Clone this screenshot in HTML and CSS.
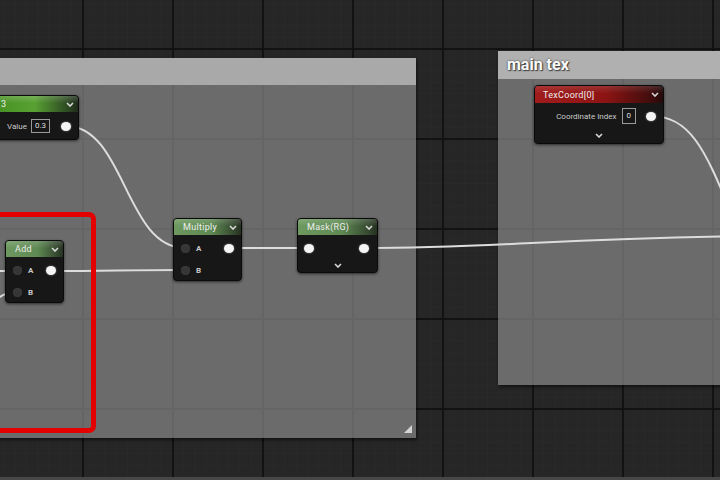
FILE: index.html
```html
<html>
  <head>
    <title>Material Graph</title>
    <meta name="viewport" content="width=device-width, initial-scale=1.0" />
    <link rel="stylesheet" href="styles.css">
  </head>
  <body>
    <div class="graph">
      <div class="comment comment-left">
        <div class="comment-title"></div>
        <span class="resize-grip"></span>
      </div>
      <div class="comment comment-right">
        <div class="comment-title">main tex</div>
      </div>

      <svg class="wires" width="720" height="480" viewBox="0 0 720 480">
        <path d="M66 126 C 125 126, 125 248, 185 248" />
        <path d="M-20 271 L 17 271" />
        <path d="M-30 312 C -8 312, -6 292, 17 292" />
        <path d="M50 271 C 110 271, 125 270, 185 270" />
        <path d="M229 248 L 309 248" />
        <path d="M364 248 C 500 248, 560 238, 760 236" />
        <path d="M651 116 C 690 116, 705 150, 730 210" />
      </svg>

      <!-- constant -->
      <div class="node node-const">
        <div class="node-head head-bright">
          <span class="node-name">3</span>
          <svg class="chevron" width="8" height="5" viewBox="0 0 8 5"><polyline points="1,1 4,4 7,1" /></svg>
        </div>
        <div class="node-body">
          <div class="pin-row pin-row-end">
            <span class="pin-label">Value</span>
            <span class="value-box">0.3</span>
            <span class="pin pin-out"></span>
          </div>
        </div>
      </div>

      <!-- add -->
      <div class="node node-add">
        <div class="node-head head-math">
          <span class="node-name">Add</span>
          <svg class="chevron" width="8" height="5" viewBox="0 0 8 5"><polyline points="1,1 4,4 7,1" /></svg>
        </div>
        <div class="node-body">
          <div class="pin-row">
            <span class="pin-in-group"><span class="pin pin-in"></span><span class="pin-label">A</span></span>
            <span class="pin pin-out"></span>
          </div>
          <div class="pin-row">
            <span class="pin-in-group"><span class="pin pin-in"></span><span class="pin-label">B</span></span>
          </div>
        </div>
      </div>

      <!-- multiply -->
      <div class="node node-multiply">
        <div class="node-head head-math">
          <span class="node-name">Multiply</span>
          <svg class="chevron" width="8" height="5" viewBox="0 0 8 5"><polyline points="1,1 4,4 7,1" /></svg>
        </div>
        <div class="node-body">
          <div class="pin-row">
            <span class="pin-in-group"><span class="pin pin-in"></span><span class="pin-label">A</span></span>
            <span class="pin pin-out"></span>
          </div>
          <div class="pin-row">
            <span class="pin-in-group"><span class="pin pin-in"></span><span class="pin-label">B</span></span>
          </div>
        </div>
      </div>

      <!-- mask -->
      <div class="node node-mask">
        <div class="node-head head-math">
          <span class="node-name">Mask(RG)</span>
          <svg class="chevron" width="8" height="5" viewBox="0 0 8 5"><polyline points="1,1 4,4 7,1" /></svg>
        </div>
        <div class="node-body">
          <div class="pin-row pin-row-mask">
            <span class="pin pin-out"></span>
            <span class="pin pin-out"></span>
          </div>
          <div class="node-more node-more-mask">
            <svg class="chevron" width="8" height="5" viewBox="0 0 8 5"><polyline points="1,1 4,4 7,1" /></svg>
          </div>
        </div>
      </div>

      <!-- texcoord -->
      <div class="node node-texcoord">
        <div class="node-head head-red">
          <span class="node-name">TexCoord[0]</span>
          <svg class="chevron" width="8" height="5" viewBox="0 0 8 5"><polyline points="1,1 4,4 7,1" /></svg>
        </div>
        <div class="node-body">
          <div class="pin-row pin-row-end">
            <span class="pin-label">Coordinate Index</span>
            <span class="value-box">0</span>
            <span class="pin pin-out"></span>
          </div>
          <div class="node-more">
            <svg class="chevron" width="8" height="5" viewBox="0 0 8 5"><polyline points="1,1 4,4 7,1" /></svg>
          </div>
        </div>
      </div>

      <div class="highlight-box"></div>
    </div>
  </body>
</html>
```

FILE: styles.css
```css
html,
body {
  margin: 0;
  padding: 0;
  background: #262626;
  font-family: Roboto, "Liberation Sans", sans-serif;
}

.graph {
  position: relative;
  width: 720px;
  height: 480px;
  overflow: hidden;
  background-color: #262626;
  background-image:
    linear-gradient(to right, #121212 0 2px, transparent 2px),
    linear-gradient(to bottom, #121212 0 2px, transparent 2px),
    linear-gradient(to right, #292929 0 1px, transparent 1px),
    linear-gradient(to bottom, #292929 0 1px, transparent 1px);
  background-size: 90px 100%, 100% 90px, 11.25px 100%, 100% 11.25px;
  background-position: 82px 0, 0 48px, 82px 0, 0 48px;
}

.graph::after {
  content: "";
  position: absolute;
  left: 0;
  right: 0;
  bottom: 0;
  height: 3px;
  background: #474747;
}

/* comment boxes */

.comment {
  position: absolute;
  display: flex;
  flex-direction: column;
  background: rgba(137, 137, 137, 0.7);
  box-shadow: 1px 2px 3px rgba(0, 0, 0, 0.55);
}

.comment-left {
  left: -10px;
  top: 58px;
  width: 426px;
  height: 380px;
}

.comment-right {
  left: 498px;
  top: 51px;
  width: 240px;
  height: 334px;
}

.comment-title {
  flex: 0 0 27px;
  background: #a9a9a9;
  color: #fafafa;
  font-size: 16px;
  font-weight: bold;
  line-height: 28px;
  padding-left: 9px;
  text-shadow: 0 0 2px #333, 1px 1px 1px #444;
}

.comment-right .comment-title {
  background: #b0b0b0;
}

.resize-grip {
  position: absolute;
  right: 4px;
  bottom: 5px;
  width: 8px;
  height: 8px;
  background: #d4d4d4;
  clip-path: polygon(100% 0, 100% 100%, 0 100%);
}

/* wires */

.wires {
  position: absolute;
  left: 0;
  top: 0;
  overflow: visible;
}

.wires path {
  fill: none;
  stroke: #dddddd;
  stroke-width: 2;
}

/* nodes */

.node {
  position: absolute;
  display: flex;
  flex-direction: column;
  background: #171717;
  border: 1px solid #0a0a0a;
  border-radius: 4px;
  box-shadow: 0 1px 3px rgba(0, 0, 0, 0.6);
  box-sizing: border-box;
  overflow: hidden;
  color: #d4d4d4;
}

.node-const {
  left: -20px;
  top: 95px;
  width: 99px;
  height: 45px;
}

.node-add {
  left: 5px;
  top: 240px;
  width: 59px;
  height: 63px;
}

.node-multiply {
  left: 173px;
  top: 218px;
  width: 69px;
  height: 63px;
}

.node-mask {
  left: 297px;
  top: 218px;
  width: 81px;
  height: 55px;
}

.node-texcoord {
  left: 534px;
  top: 85px;
  width: 130px;
  height: 59px;
}

.node-head {
  flex: 0 0 16px;
  display: flex;
  align-items: center;
  justify-content: space-between;
  padding: 0 4px 0 9px;
  font-size: 9px;
  color: #eeeeee;
  letter-spacing: 0.3px;
}

.node-texcoord .node-head {
  flex-basis: 17px;
  padding-left: 8px;
}

.node-const .node-name {
  margin-left: 11px;
}

.head-bright {
  background:
    linear-gradient(to bottom, rgba(255, 255, 255, 0.18), rgba(255, 255, 255, 0) 45%),
    linear-gradient(to right, #3f8a1e, #58a132 55%, #2f4d23 88%, #1f2a1c);
}

.head-math {
  background:
    linear-gradient(to bottom, rgba(255, 255, 255, 0.16), rgba(255, 255, 255, 0) 45%),
    linear-gradient(to right, #6d9960, #5f8a53 55%, #34472f 90%, #26301f);
}

.head-red {
  background:
    linear-gradient(to bottom, rgba(255, 255, 255, 0.12), rgba(255, 255, 255, 0) 45%),
    linear-gradient(to right, #a11b1b, #8d1414 55%, #3e0c0c 92%, #220a0a);
}

.chevron polyline {
  fill: none;
  stroke: #d8d8d8;
  stroke-width: 1.6;
}

.node-body {
  flex: 1 1 auto;
  display: flex;
  flex-direction: column;
  padding-top: 2px;
}

.node-const .node-body {
  padding-top: 3px;
}

.pin-row {
  flex: 0 0 22px;
  display: flex;
  align-items: center;
  justify-content: space-between;
  padding: 0 7px 0 7px;
}

.pin-row-end {
  justify-content: flex-end;
}

.pin-row-mask {
  padding: 0 8px 0 6px;
}

.pin-in-group {
  display: flex;
  align-items: center;
  gap: 6px;
}

.pin {
  display: block;
  border-radius: 50%;
}

.pin-out {
  width: 10px;
  height: 9px;
  background: #f4f4f4;
  box-shadow: 0 0 2px rgba(255, 255, 255, 0.5);
}

.pin-in {
  width: 9px;
  height: 9px;
  background: #363636;
  box-shadow: inset 0 0 1px #555;
}

.pin-label {
  font-size: 8px;
  font-weight: bold;
  color: #c9c9c9;
}

.pin-row-end .pin-label {
  font-weight: normal;
  margin-right: 4px;
}

.value-box {
  font-size: 8px;
  color: #dddddd;
  border: 1px solid #9a9a9a;
  padding: 1px 3px;
  line-height: 10px;
  margin-right: 11px;
}

.node-texcoord .value-box {
  padding: 2px 4px;
  margin-right: 10px;
}

.node-texcoord .pin-label {
  margin-right: 5px;
}

.node-more {
  flex: 0 0 16px;
  display: flex;
  align-items: center;
  justify-content: center;
}

.node-more-mask {
  flex-basis: 12px;
}

/* annotation */

.highlight-box {
  position: absolute;
  left: -10px;
  top: 212px;
  width: 106px;
  height: 221px;
  box-sizing: border-box;
  border: 5px solid #e30000;
  border-radius: 7px;
}
```
